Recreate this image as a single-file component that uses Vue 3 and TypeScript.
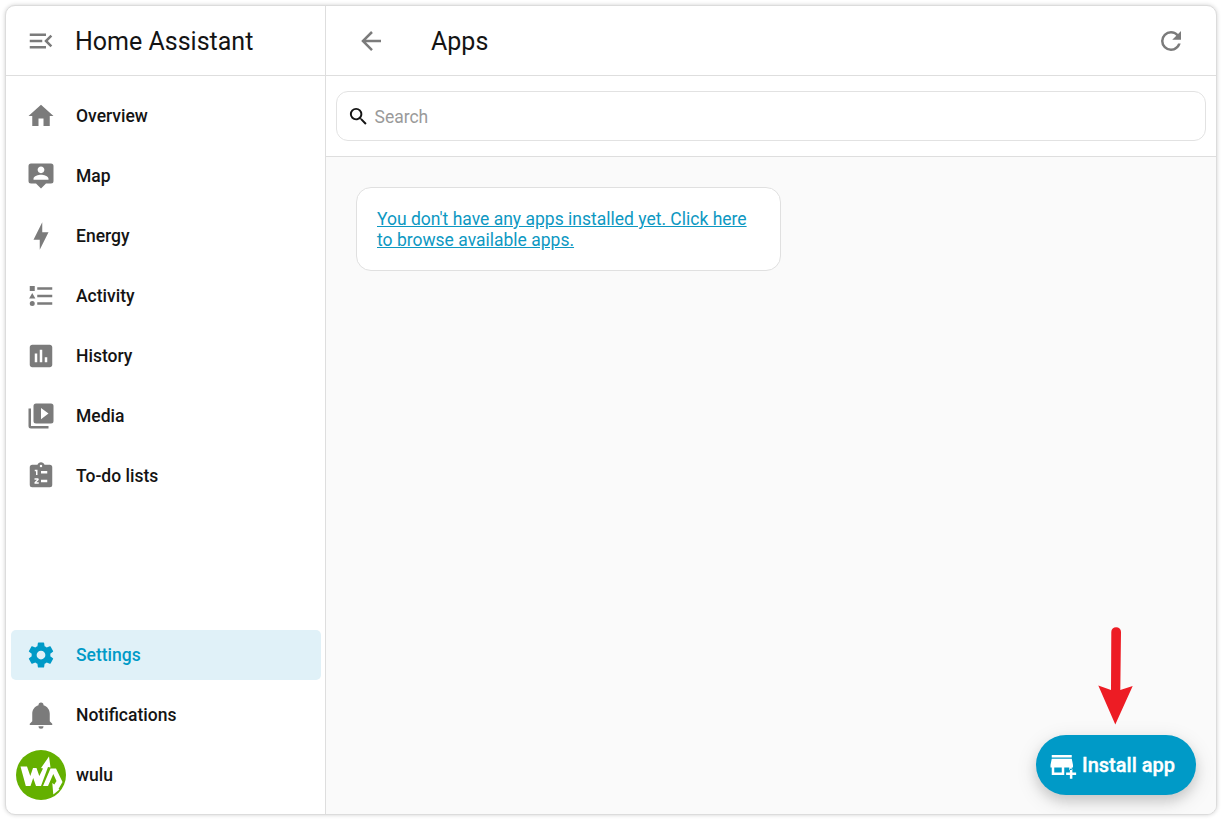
<script setup lang="ts">
interface NavItem {
  label: string
  icon: string
}

const icons = {
  menu: 'M21,15.61L19.59,17L14.58,12L19.59,7L21,8.39L17.44,12L21,15.61M3,6H16V8H3V6M3,13V11H13V13H3M3,18V16H16V18H3Z',
  back: 'M20,11V13H8L13.5,18.5L12.08,19.92L4.16,12L12.08,4.08L13.5,5.5L8,11H20Z',
  refresh: 'M17.65,6.35C16.2,4.9 14.21,4 12,4A8,8 0 0,0 4,12A8,8 0 0,0 12,20C15.73,20 18.84,17.45 19.73,14H17.65C16.83,16.33 14.61,18 12,18A6,6 0 0,1 6,12A6,6 0 0,1 12,6C13.66,6 15.14,6.69 16.22,7.78L13,11H20V4L17.65,6.35Z',
  search: 'M9.5,3A6.5,6.5 0 0,1 16,9.5C16,11.11 15.41,12.59 14.44,13.73L14.71,14H15.5L20.5,19L19,20.5L14,15.5V14.71L13.73,14.44C12.59,15.41 11.11,16 9.5,16A6.5,6.5 0 0,1 3,9.5A6.5,6.5 0 0,1 9.5,3M9.5,5C7,5 5,7 5,9.5C5,12 7,14 9.5,14C12,14 14,12 14,9.5C14,7 12,5 9.5,5Z',
  cog: 'M12,15.5A3.5,3.5 0 0,1 8.5,12A3.5,3.5 0 0,1 12,8.5A3.5,3.5 0 0,1 15.5,12A3.5,3.5 0 0,1 12,15.5M19.43,12.97C19.47,12.65 19.5,12.33 19.5,12C19.5,11.67 19.47,11.34 19.43,11L21.54,9.37C21.73,9.22 21.78,8.95 21.66,8.73L19.66,5.27C19.54,5.05 19.27,4.96 19.05,5.05L16.56,6.05C16.04,5.66 15.5,5.32 14.87,5.07L14.5,2.42C14.46,2.18 14.25,2 14,2H10C9.75,2 9.54,2.18 9.5,2.42L9.13,5.07C8.5,5.32 7.96,5.66 7.44,6.05L4.95,5.05C4.73,4.96 4.46,5.05 4.34,5.27L2.34,8.73C2.21,8.95 2.27,9.22 2.46,9.37L4.57,11C4.53,11.34 4.5,11.67 4.5,12C4.5,12.33 4.53,12.65 4.57,12.97L2.46,14.63C2.27,14.78 2.21,15.05 2.34,15.27L4.34,18.73C4.46,18.95 4.73,19.03 4.95,18.95L7.44,17.94C7.96,18.34 8.5,18.68 9.13,18.93L9.5,21.58C9.54,21.82 9.75,22 10,22H14C14.25,22 14.46,21.82 14.5,21.58L14.87,18.93C15.5,18.67 16.04,18.34 16.56,17.94L19.05,18.95C19.27,19.03 19.54,18.95 19.66,18.73L21.66,15.27C21.78,15.05 21.73,14.78 21.54,14.63L19.43,12.97Z',
  bell: 'M21,19V20H3V19L5,17V11C5,7.9 7.03,5.17 10,4.29C10,4.19 10,4.1 10,4A2,2 0 0,1 12,2A2,2 0 0,1 14,4C14,4.1 14,4.19 14,4.29C16.97,5.17 19,7.9 19,11V17L21,19M14,21A2,2 0 0,1 12,23A2,2 0 0,1 10,21',
  storePlus: 'M3,4H19V6H3V4M3,7H19L20,12V14H19V16H17V14H13V20H3V14H2V12L3,7M5,14V18H11V14H5M17.5,15H19.5V18H22.5V20H19.5V23H17.5V20H14.5V18H17.5V15Z',
}

const navItems: NavItem[] = [
  { label: 'Overview', icon: 'M10,20V14H14V20H19V12H22L12,3L2,12H5V20H10Z' },
  { label: 'Map', icon: 'M20,2H4A2,2 0 0,0 2,4V16A2,2 0 0,0 4,18H8L12,22L16,18H20A2,2 0 0,0 22,16V4A2,2 0 0,0 20,2M12,4.3C13.5,4.3 14.7,5.5 14.7,7C14.7,8.5 13.5,9.7 12,9.7C10.5,9.7 9.3,8.5 9.3,7C9.3,5.5 10.5,4.3 12,4.3M18,15H6V14.1C6,12.1 10,11 12,11C14,11 18,12.1 18,14.1V15Z' },
  { label: 'Energy', icon: 'M11 15H6L13 1V9H18L11 23V15Z' },
  { label: 'Activity', icon: 'M5,9.5L7.5,14H2.5L5,9.5M3,4H7V8H3V4M5,20A2,2 0 0,0 7,18A2,2 0 0,0 5,16A2,2 0 0,0 3,18A2,2 0 0,0 5,20M9,5V7H21V5H9M9,19H21V17H9V19M9,13H21V11H9V13Z' },
  { label: 'History', icon: 'M9 17H7V10H9V17M13 17H11V7H13V17M17 17H15V13H17V17M19 3H5C3.9 3 3 3.9 3 5V19C3 20.1 3.9 21 5 21H19C20.1 21 21 20.1 21 19V5C21 3.9 20.1 3 19 3Z' },
  { label: 'Media', icon: 'M4,6H2V20A2,2 0 0,0 4,22H18V20H4V6M20,2H8A2,2 0 0,0 6,4V16A2,2 0 0,0 8,18H20A2,2 0 0,0 22,16V4A2,2 0 0,0 20,2M12,14.5V5.5L18,10L12,14.5Z' },
  { label: 'To-do lists', icon: 'M19,3H14.82C14.4,1.84 13.3,1 12,1S9.6,1.84 9.18,3H5A2,2 0 0,0 3,5V19A2,2 0 0,0 5,21H19A2,2 0 0,0 21,19V5A2,2 0 0,0 19,3M12,3A1,1 0 0,1 13,4A1,1 0 0,1 12,5A1,1 0 0,1 11,4A1,1 0 0,1 12,3M7,7H9.2V11.2H8V8.1H7V7M10.2,17V18.2H6.8V17L8.8,15H6.8V13.8H9.2C9.8,13.8 10.2,14.2 10.2,14.7C10.2,15 10.1,15.2 9.9,15.4L8.3,17H10.2M12,8H17V10H12V8M12,15H17V17H12V15Z' },
]
</script>

<template>
  <div class="window">
    <aside class="sidebar">
      <header class="brand">
        <svg class="icon" viewBox="0 0 24 24"><path :d="icons.menu" /></svg>
        <span>Home Assistant</span>
      </header>
      <nav class="nav">
        <a v-for="item in navItems" :key="item.label" class="nav-item">
          <svg class="icon" viewBox="0 0 24 24"><path fill-rule="evenodd" :d="item.icon" /></svg>
          <span>{{ item.label }}</span>
        </a>
      </nav>
      <nav class="nav bottom">
        <a class="nav-item active">
          <svg class="icon" viewBox="0 0 24 24"><path :d="icons.cog" /></svg>
          <span>Settings</span>
        </a>
        <a class="nav-item">
          <svg class="icon" viewBox="0 0 24 24"><path :d="icons.bell" /></svg>
          <span>Notifications</span>
        </a>
        <a class="nav-item user">
          <svg class="avatar" viewBox="0 0 50 50">
            <circle cx="25" cy="25" r="25" fill="#64b000" />
            <path d="M4.5 16.5H11L14.3 26L17 18H20.5L23.3 26L27 18.5L25 18L33 6.5L34.5 17.5L32 17L25 36H20L17.2 28L14.5 36H9.8Z" fill="#fff" />
            <path d="M27 36L34.5 18.5H40L46.5 32L42.5 39L43.5 39.5L37.3 44.5L36.3 33L38.3 34.5L40.5 31L37.3 24L32 36Z" fill="#fff" />
          </svg>
          <span>wulu</span>
        </a>
      </nav>
    </aside>
    <main class="main">
      <header class="toolbar">
        <svg class="icon" viewBox="0 0 24 24"><path :d="icons.back" /></svg>
        <h1>Apps</h1>
        <svg class="icon" viewBox="0 0 24 24"><path :d="icons.refresh" /></svg>
      </header>
      <div class="search-row">
        <label class="search">
          <svg viewBox="0 0 24 24"><path :d="icons.search" /></svg>
          <span>Search</span>
        </label>
      </div>
      <section class="content">
        <div class="card"><a>You don't have any apps installed yet. Click here to browse available apps.</a></div>
      </section>
      <svg class="arrow" viewBox="0 0 36 100">
        <path d="M13.3 7A4.8 4.8 0 0 1 23 7L22.3 65L34.7 61L17.3 99.5L.3 60.5L13 65Z" />
      </svg>
      <button class="fab">
        <svg class="icon" viewBox="0 0 24 24"><path fill-rule="evenodd" :d="icons.storePlus" /></svg>
        <span>Install app</span>
      </button>
    </main>
  </div>
</template>

<style>
body { margin: 0; background: #fff; }
</style>

<style scoped>
.window {
  box-sizing: border-box;
  width: 1212px;
  height: 810px;
  margin: 5px;
  display: flex;
  overflow: hidden;
  border: 1px solid #dcdcdc;
  border-radius: 10px;
  box-shadow: 0 0 4px rgba(0, 0, 0, .18);
  font-family: Roboto, sans-serif;
  color: #141414;
  background: #fff;
}
.icon { width: 30px; height: 30px; flex: none; fill: #7b7b7b; }
.sidebar {
  box-sizing: border-box;
  width: 320px;
  flex: none;
  display: flex;
  flex-direction: column;
  border-right: 1px solid #dedede;
}
.brand {
  box-sizing: border-box;
  height: 70px;
  flex: none;
  display: flex;
  align-items: center;
  gap: 19px;
  padding-left: 20px;
  border-bottom: 1px solid #dedede;
  font-size: 25px;
}
.brand span { padding-top: 2px; }
.nav { display: flex; flex-direction: column; gap: 10px; padding: 15px 4px 0 5px; }
.bottom { margin-top: auto; padding-bottom: 14px; }
.nav-item {
  box-sizing: border-box;
  height: 50px;
  display: flex;
  align-items: center;
  gap: 20px;
  padding-left: 15px;
  border-radius: 5px;
  font-size: 17.5px;
  font-weight: 500;
}
.active { background: #e0f1f8; color: #009ac7; }
.active .icon { fill: #009ac7; }
.user { padding-left: 5px; gap: 10px; }
.avatar { width: 50px; height: 50px; flex: none; }
.main { position: relative; flex: 1; display: flex; flex-direction: column; }
.toolbar {
  box-sizing: border-box;
  height: 70px;
  flex: none;
  display: flex;
  align-items: center;
  padding: 0 30px;
  border-bottom: 1px solid #dedede;
}
.toolbar h1 { flex: 1; margin: 0 0 0 45px; padding-top: 2px; font-size: 25px; font-weight: 400; }
.search-row {
  box-sizing: border-box;
  height: 81px;
  flex: none;
  padding: 15px 10px;
  border-bottom: 1px solid #dedede;
}
.search {
  box-sizing: border-box;
  height: 50px;
  display: flex;
  align-items: center;
  gap: 4.5px;
  padding-left: 10px;
  border: 1px solid #e2e2e2;
  border-radius: 12px;
  font-size: 17.5px;
  color: #9a9a9a;
}
.search span { padding-top: 2px; }
.search svg { width: 23px; height: 23px; fill: #141414; }
.content { flex: 1; padding: 30px; background: #fafafa; }
.card {
  box-sizing: border-box;
  width: 425px;
  height: 84px;
  padding: 21px 20px 19px;
  border: 1px solid #e0e0e0;
  border-radius: 15px;
  background: #fff;
  font-size: 17.5px;
  line-height: 21px;
}
.card a { color: #0d98c2; text-decoration: underline; }
.arrow {
  position: absolute;
  right: 82px;
  bottom: 89px;
  width: 36px;
  height: 100px;
  fill: #ed1c24;
}
.fab {
  position: absolute;
  right: 20px;
  bottom: 19px;
  width: 160px;
  height: 60px;
  display: flex;
  align-items: center;
  gap: 4px;
  padding: 0 0 0 12px;
  border: 0;
  border-radius: 30px;
  background: #009ac7;
  box-shadow: 0 6px 12px rgba(0, 0, 0, .12), 0 6px 22px rgba(0, 0, 0, .12);
  color: #fff;
  font: 500 20px Roboto, sans-serif;
}
.fab span { -webkit-text-stroke: .35px #fff; }
.fab .icon { fill: #fff; }
</style>
